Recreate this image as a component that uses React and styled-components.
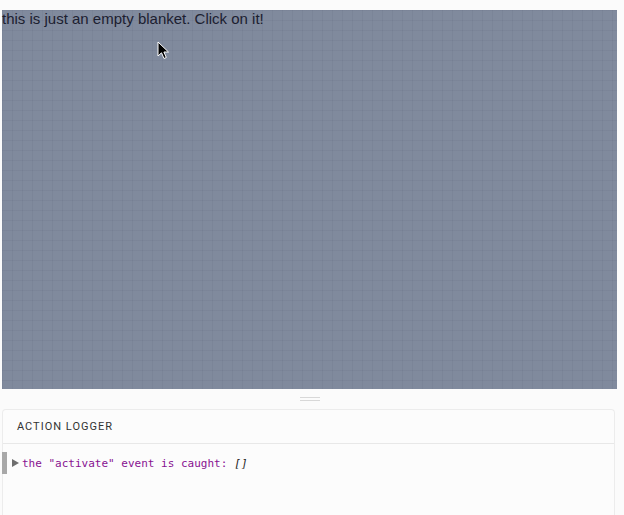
import styled, { createGlobalStyle } from "styled-components";

const GlobalStyle = createGlobalStyle`
  html, body {
    margin: 0;
    padding: 0;
    background: #fbfbfb;
    font-family: "Liberation Sans", Arial, sans-serif;
  }
`;

const Page = styled.div`
  width: 624px;
  height: 515px;
  padding: 10px 7px 0 2px;
  box-sizing: border-box;
  display: flex;
  flex-direction: column;
  overflow: hidden;
`;

const Blanket = styled.div`
  position: relative;
  height: 379px;
  background-color: #808a9d;
  background-image:
    linear-gradient(to right, rgba(60, 70, 90, 0.07) 1px, transparent 1px),
    linear-gradient(to bottom, rgba(60, 70, 90, 0.07) 1px, transparent 1px);
  background-size: 10px 10px;
  color: #1c2030;
  font-size: 15px;
  line-height: 18px;
`;

const Cursor = styled.svg`
  position: absolute;
  left: 155px;
  top: 31px;
`;

const Handle = styled.div`
  height: 20px;
  display: flex;
  flex-direction: column;
  align-items: center;
  justify-content: center;
  gap: 2px;
  span {
    width: 20px;
    height: 1px;
    background: #d8d8d8;
  }
`;

const Panel = styled.div`
  flex: 1;
  margin-right: 2px;
  border: 1px solid #ececec;
  border-bottom: none;
  border-radius: 4px 4px 0 0;
  background: #fcfcfc;
`;

const PanelHeader = styled.div`
  height: 33px;
  padding-left: 14px;
  display: flex;
  align-items: center;
  border-bottom: 1px solid #e8e8e8;
  font-family: Roboto, "Liberation Sans", sans-serif;
  font-size: 11px;
  letter-spacing: 1px;
  color: #333;
`;

const LogRow = styled.div`
  margin-top: 8px;
  height: 22px;
  display: flex;
  align-items: center;
  border-left: 5px solid #a8a8a8;
  margin-left: -1px;
  padding-left: 5px;
  font-family: "DejaVu Sans Mono", monospace;
  font-size: 11px;
  color: #881391;
`;

const Arrow = styled.svg`
  margin-right: 3px;
  flex-shrink: 0;
`;

const Value = styled.span`
  font-style: italic;
  color: #222;
  margin-left: 7px;
`;

export default function App() {
  return (
    <>
      <GlobalStyle />
      <Page>
        <Blanket>
          this is just an empty blanket. Click on it!
          <Cursor width="14" height="20" viewBox="0 0 14 20">
            <path
              d="M1 1 L1 15 L4.5 11.8 L7 17.5 L9.3 16.5 L6.9 11 L11.5 11 Z"
              fill="#000"
              stroke="#fff"
              strokeWidth="1"
            />
          </Cursor>
        </Blanket>
        <Handle>
          <span />
          <span />
        </Handle>
        <Panel>
          <PanelHeader>ACTION LOGGER</PanelHeader>
          <LogRow>
            <Arrow width="7" height="8" viewBox="0 0 7 8">
              <path d="M0 0 L7 4 L0 8 Z" fill="#6e6e6e" />
            </Arrow>
            the "activate" event is caught:
            <Value>[]</Value>
          </LogRow>
        </Panel>
      </Page>
    </>
  );
}
